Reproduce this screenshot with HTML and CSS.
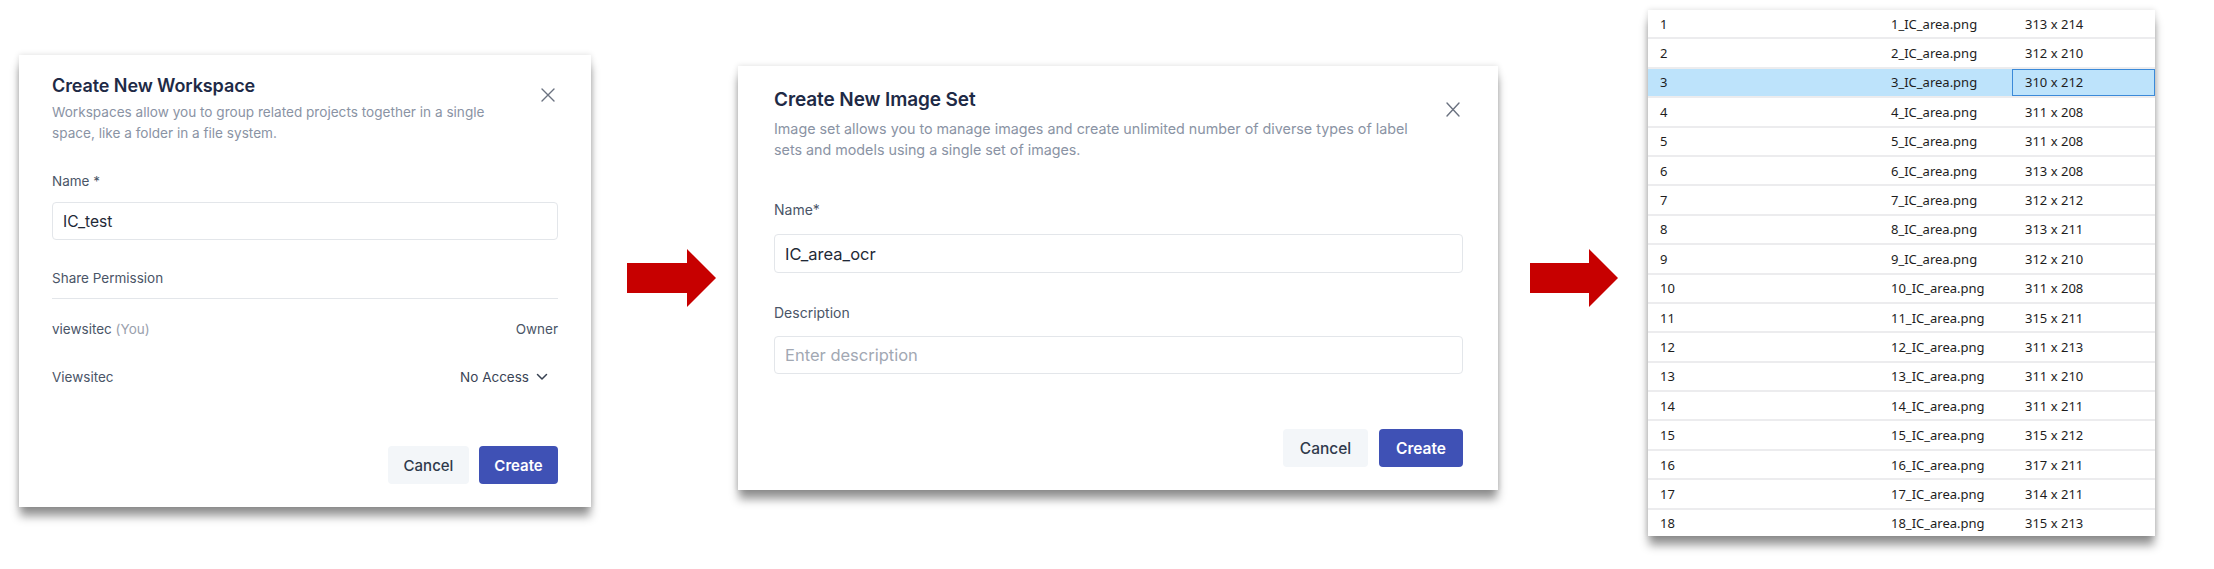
FILE: index.html
```html
<!DOCTYPE html>
<html lang="en">
<head>
<meta charset="utf-8">
<title>Workflow</title>
<link rel="stylesheet" href="styles.css">
</head>
<body>
<div class="stage">
  <section class="dialog dialog-ws">
    <div class="dlg-head">
      <div class="dlg-titles">
        <h2 class="dlg-title">Create New Workspace</h2>
        <p class="dlg-sub">Workspaces allow you to group related projects together in a single space, like a folder in a file system.</p>
      </div>
      <span class="dlg-close"><svg width="14" height="14" viewBox="0 0 14 14"><path d="M1 1 L13 13 M13 1 L1 13" stroke="#6b7280" stroke-width="1.4" fill="none" stroke-linecap="round"/></svg></span>
    </div>
    <label class="fld-label ws-name-label">Name *</label>
    <div class="fld-input">IC_test</div>
    <div class="fld-label ws-share-label">Share Permission</div>
    <div class="divider"></div>
    <div class="perm-row perm-first"><span>viewsitec <span class="muted">(You)</span></span><span>Owner</span></div>
    <div class="perm-row perm-second"><span>Viewsitec</span><span class="perm-select">No Access <svg width="12" height="8" viewBox="0 0 12 8"><path d="M1.5 1.5 L6 6 L10.5 1.5" stroke="#374151" stroke-width="1.5" fill="none" stroke-linecap="round" stroke-linejoin="round"/></svg></span></div>
    <div class="dlg-actions ws-actions">
      <span class="btn btn-cancel">Cancel</span>
      <span class="btn btn-create">Create</span>
    </div>
  </section>

  <svg class="arrow arrow-one" width="89" height="58" viewBox="0 0 89 58"><polygon points="0,14 60,14 60,0 89,29 60,58 60,44 0,44" fill="#c70000"/></svg>

  <section class="dialog dialog-is">
    <div class="dlg-head">
      <div class="dlg-titles">
        <h2 class="dlg-title">Create New Image Set</h2>
        <p class="dlg-sub">Image set allows you to manage images and create unlimited number of diverse types of label sets and models using a single set of images.</p>
      </div>
      <span class="dlg-close"><svg width="14" height="15" viewBox="0 0 14 15"><path d="M1 1 L13 14 M13 1 L1 14" stroke="#6b7280" stroke-width="1.4" fill="none" stroke-linecap="round"/></svg></span>
    </div>
    <div class="fld-label is-name-label">Name*</div>
    <div class="fld-input is-input">IC_area_ocr</div>
    <div class="fld-label is-desc-label">Description</div>
    <div class="fld-input is-input placeholder">Enter description</div>
    <div class="dlg-actions is-actions">
      <span class="btn btn-cancel">Cancel</span>
      <span class="btn btn-create">Create</span>
    </div>
  </section>

  <svg class="arrow arrow-two" width="88" height="58" viewBox="0 0 88 58"><polygon points="0,14 59,14 59,0 88,29 59,58 59,44 0,44" fill="#c70000"/></svg>

  <section class="filelist">
    <div class="frow"><span>1</span><span>1_IC_area.png</span><span class="c3">313 x 214</span></div>
    <div class="frow"><span>2</span><span>2_IC_area.png</span><span class="c3">312 x 210</span></div>
    <div class="frow selected"><span>3</span><span>3_IC_area.png</span><span class="c3 focus">310 x 212</span></div>
    <div class="frow"><span>4</span><span>4_IC_area.png</span><span class="c3">311 x 208</span></div>
    <div class="frow"><span>5</span><span>5_IC_area.png</span><span class="c3">311 x 208</span></div>
    <div class="frow"><span>6</span><span>6_IC_area.png</span><span class="c3">313 x 208</span></div>
    <div class="frow"><span>7</span><span>7_IC_area.png</span><span class="c3">312 x 212</span></div>
    <div class="frow"><span>8</span><span>8_IC_area.png</span><span class="c3">313 x 211</span></div>
    <div class="frow"><span>9</span><span>9_IC_area.png</span><span class="c3">312 x 210</span></div>
    <div class="frow"><span>10</span><span>10_IC_area.png</span><span class="c3">311 x 208</span></div>
    <div class="frow"><span>11</span><span>11_IC_area.png</span><span class="c3">315 x 211</span></div>
    <div class="frow"><span>12</span><span>12_IC_area.png</span><span class="c3">311 x 213</span></div>
    <div class="frow"><span>13</span><span>13_IC_area.png</span><span class="c3">311 x 210</span></div>
    <div class="frow"><span>14</span><span>14_IC_area.png</span><span class="c3">311 x 211</span></div>
    <div class="frow"><span>15</span><span>15_IC_area.png</span><span class="c3">315 x 212</span></div>
    <div class="frow"><span>16</span><span>16_IC_area.png</span><span class="c3">317 x 211</span></div>
    <div class="frow"><span>17</span><span>17_IC_area.png</span><span class="c3">314 x 211</span></div>
    <div class="frow"><span>18</span><span>18_IC_area.png</span><span class="c3">315 x 213</span></div>
  </section>
</div>
</body>
</html>
```

FILE: styles.css
```css
* { box-sizing: border-box; }
html, body { margin: 0; padding: 0; background: #ffffff; }
body { width: 2214px; height: 569px; overflow: hidden; font-family: Inter, "Noto Sans", sans-serif; }

.stage {
  display: flex;
  align-items: flex-start;
  padding-left: 19px;
}

/* ---------- dialogs ---------- */
.dialog {
  background: #ffffff;
  display: flex;
  flex-direction: column;
  box-shadow: 0 10px 9px -1px rgba(0,0,0,0.42), 0 0 6px rgba(0,0,0,0.14);
}
.dialog-ws { width: 572px; margin-top: 55px; padding: 19px 33px 23px 33px; }
.dialog-is { width: 760px; margin-top: 66px; padding: 21px 35px 23px 36px; }

.dlg-head { display: flex; justify-content: space-between; align-items: flex-start; }
.dlg-titles { display: flex; flex-direction: column; }
.dlg-title {
  margin: 0;
  color: #1e2a46;
  font-weight: 600;
  letter-spacing: -0.1px;
}
.dlg-sub { margin: 0; color: #8a93a4; }
.dlg-close { display: flex; }

.dialog-ws .dlg-title { font-size: 18px; line-height: 24px; margin-bottom: 4px; }
.dialog-ws .dlg-sub { font-size: 13.6px; line-height: 21px; width: 450px; }
.dialog-ws .dlg-close { margin-top: 14px; margin-right: 3px; }

.dialog-is .dlg-title { font-size: 19px; line-height: 26px; margin-bottom: 5px; }
.dialog-is .dlg-sub { font-size: 14.3px; line-height: 21px; width: 648px; }
.dialog-is .dlg-close { margin-top: 15px; margin-right: 3px; }

.fld-label { color: #4a5567; line-height: 20px; display: block; }
.dialog-ws .fld-label { font-size: 13.5px; }
.dialog-is .fld-label { font-size: 14px; }

.fld-input {
  border: 1px solid #e3e6ea;
  border-radius: 4px;
  color: #1f2937;
  display: flex;
  align-items: center;
  padding-left: 10px;
}
.dialog-ws .fld-input { height: 38px; font-size: 15.6px; }
.is-input { height: 39px; font-size: 16.5px; }
.is-input.placeholder { height: 38px; color: #a2a8b3; }

.ws-name-label { margin-top: 27px; margin-bottom: 11px; }
.ws-share-label { margin-top: 28px; }
.divider { height: 1px; background: #e3e6ea; margin-top: 10px; }

.perm-row {
  display: flex;
  justify-content: space-between;
  align-items: center;
  line-height: 20px;
  font-size: 13.5px;
  color: #4a5567;
}
.perm-first { margin-top: 20px; }
.perm-second { margin-top: 28px; }
.muted { color: #9aa1ad; }
.perm-select { display: flex; align-items: center; gap: 7px; margin-right: 10px; color: #3a4456; }

.is-name-label { margin-top: 40px; margin-bottom: 14px; }
.is-desc-label { margin-top: 30px; margin-bottom: 13px; }

.dlg-actions { display: flex; justify-content: flex-end; }
.ws-actions { margin-top: 59px; gap: 10px; }
.is-actions { margin-top: 55px; gap: 11px; }

.btn {
  height: 38px;
  border-radius: 4px;
  display: flex;
  align-items: center;
  justify-content: center;
  font-size: 15px;
}
.btn-cancel { background: #f3f6f9; color: #2f3a4c; font-weight: 500; }
.btn-create { background: #3f51b5; color: #ffffff; font-weight: 600; }
.ws-actions .btn-cancel { width: 81px; }
.ws-actions .btn-create { width: 79px; }
.is-actions .btn-cancel { width: 85px; font-size: 15.5px; }
.is-actions .btn-create { width: 84px; font-size: 15.5px; }

/* ---------- arrows ---------- */
.arrow { flex: none; margin-top: 249px; }
.arrow-one { margin-left: 36px; margin-right: 22px; }
.arrow-two { margin-left: 32px; margin-right: 30px; }

/* ---------- file list ---------- */
.filelist {
  width: 507px;
  height: 526px;
  margin-top: 10px;
  background: #ffffff;
  overflow: hidden;
  box-shadow: 0 10px 9px -1px rgba(0,0,0,0.42), 0 0 6px rgba(0,0,0,0.14);
  font-family: "Noto Sans", "Open Sans", sans-serif;
  font-size: 13px;
  color: #1d1d1d;
}
.frow {
  display: grid;
  grid-template-columns: 243px 121px 143px;
  height: 29.4px;
  align-items: stretch;
  border-bottom: 2px solid #ececee;
}
.frow > span { display: flex; align-items: center; }
.frow > span:first-child { padding-left: 12px; }
.frow .c3 { padding-left: 13px; }
.frow.selected { background: #bde3fb; }
.frow .focus { border: 1px solid #3b8ad9; padding-left: 12px; }
```
